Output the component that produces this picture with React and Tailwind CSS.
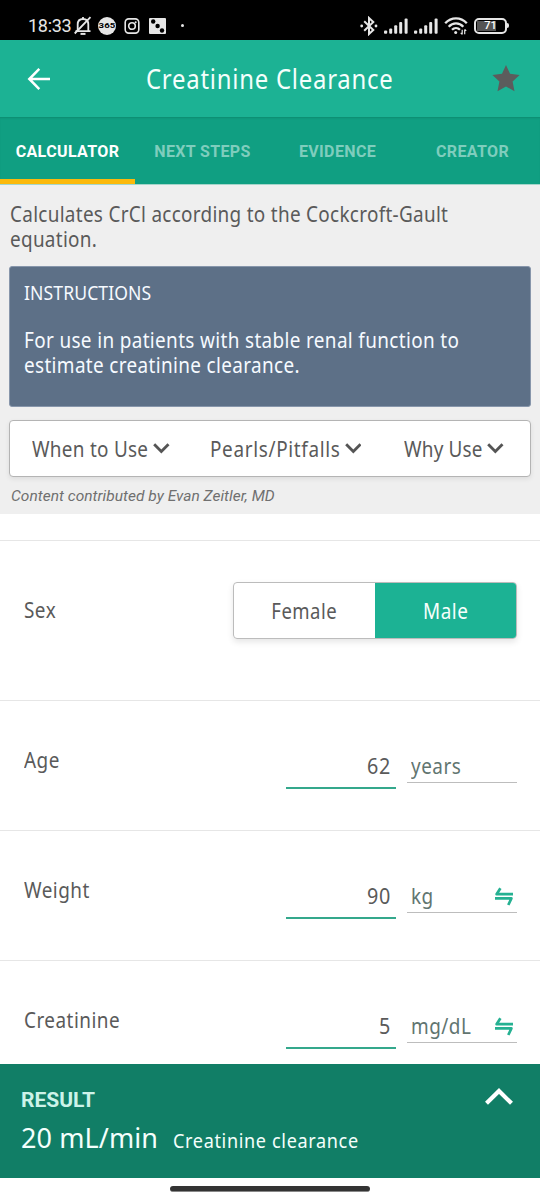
import React from "react";

const FONT = "font-['Noto_Sans',sans-serif]";
const NARROW = "inline-block origin-left scale-x-88 whitespace-nowrap";

function StatusBar() {
  return (
    <div className="flex h-10 items-end justify-between bg-black pr-[31px] pb-[3px] pl-[28px] text-[#e6e6e6]">
      <div className="flex h-[23px] items-center">
        <span className="w-[46px] text-[18px] leading-[23px] font-normal tracking-[-0.300px]">18:33</span>
        <svg className="h-5 w-[18px]" viewBox="0 0 18 20" fill="none" stroke="currentColor" strokeWidth="1.800">
          <path d="M1.500 15.200H16.500M3.700 15V8.500C3.700 5.200 5.800 3 9 3S14.300 5.200 14.300 8.500V15" />
          <path d="M9 1V3M0.700 17.500L16.500 1.200" />
          <path d="M6.500 17.900h5" strokeWidth="2" />
        </svg>
        <span className="ml-[6px] flex h-[18px] w-[18px] items-center justify-center rounded-full bg-[#e6e6e6] font-['Roboto',sans-serif] text-[8px] font-bold text-black">
          <span className="inline-block scale-x-120">365</span>
        </span>
        <svg className="ml-[8px] h-4 w-4" viewBox="0 0 16 16" fill="none" stroke="currentColor" strokeWidth="1.600">
          <rect x="1.200" y="0.900" width="13.600" height="14.200" rx="3.500" />
          <circle cx="8" cy="8" r="3.300" />
          <circle cx="11.700" cy="4.300" r="1" fill="currentColor" stroke="none" />
        </svg>
        <svg className="ml-[9px] h-4 w-[17px]" viewBox="0 0 17 16">
          <rect width="17" height="16" rx="1" fill="currentColor" />
          <circle cx="4.200" cy="3.500" r="2.200" fill="#000" />
          <circle cx="8.600" cy="8" r="2.200" fill="#000" />
          <circle cx="13" cy="12.500" r="2.200" fill="#000" />
        </svg>
        <span className="ml-[15px] h-[3px] w-[3px] rounded-full bg-[#e6e6e6]" />
      </div>
      <div className="flex h-[23px] items-center">
        <svg className="h-[20px] w-[18px]" viewBox="0 0 18 20" fill="none" stroke="currentColor" strokeWidth="2">
          <path d="M4.200 5.200L13.300 14L9 18V2L13.300 6L4.200 14.800" />
          <circle cx="1.700" cy="10" r="1.400" fill="currentColor" stroke="none" />
          <circle cx="16" cy="10" r="1.400" fill="currentColor" stroke="none" />
        </svg>
        <Signal className="ml-[6px]" />
        <Signal className="ml-[6px]" />
        <svg className="ml-[6px] h-[18px] w-[24px]" viewBox="0 0 24 18" fill="none" stroke="currentColor" strokeWidth="2.300">
          <path d="M1.200 6.300C7.200 -0.200 16.800 -0.200 22.800 6.300" />
          <path d="M4.700 9.700C8.800 5.300 15.200 5.300 19.300 9.700" />
          <path d="M8 12.800C10.300 10.500 13.700 10.500 16 12.800" />
          <circle cx="11.700" cy="15.600" r="1.500" fill="currentColor" stroke="none" />
          <path d="M18.200 17.500V12.800M20.700 12.500V17.200M16.700 15.900l1.500 1.500M22.200 13.900l-1.500-1.500" strokeWidth="1.200" />
        </svg>
        <div className="ml-[6px] flex h-4 w-[33px] items-center rounded-[5px] border-2 border-[#e6e6e6] p-px">
          <div className="flex h-full w-[19px] items-center justify-center bg-[#555] pl-[8px] font-['Roboto',sans-serif] text-[11px] leading-none font-medium text-white">
            71
          </div>
        </div>
        <span className="h-[5px] w-[2px] rounded-r bg-[#e6e6e6]" />
      </div>
    </div>
  );
}

function Signal({ className }) {
  return (
    <svg className={"h-4 w-6 " + className} viewBox="0 0 24 16" fill="currentColor">
      <rect x="0" y="12.500" width="3.200" height="3.200" rx="1" />
      <rect x="5.200" y="10.500" width="3" height="5.200" rx="1" />
      <rect x="10.200" y="7.300" width="3" height="8.400" rx="1" />
      <rect x="15.200" y="4" width="3" height="11.700" rx="1" />
      <rect x="20.600" y="0.500" width="3" height="15.200" rx="1" />
    </svg>
  );
}

function Header() {
  return (
    <header className="flex h-[77px] items-center bg-[#1cb294] pr-[20px] pl-[27px]">
      <svg className="h-6 w-6" viewBox="0 0 24 24" fill="none" stroke="#fff" strokeWidth="2.500">
        <path d="M23 12H2.500M12.300 1.900L2.300 12L12.300 22.100" />
      </svg>
      <h1 className={FONT + " ml-[95px] w-[346px] pt-[2px] text-[26.500px] text-[#f4fffc]"}>
        <span className="inline-block origin-left scale-x-90 tracking-[0.870px] whitespace-nowrap">
          Creatinine Clearance
        </span>
      </h1>
      <svg className="h-[27px] w-[28px]" viewBox="0 0 28 27" fill="#5c5c5c">
        <path d="M14 0L18 8.700L27.600 10L20.600 16.500L22.500 26.200L14 21.500L5.500 26.200L7.400 16.500L0.400 10L10 8.700Z" />
      </svg>
    </header>
  );
}

function Tabs() {
  const tabs = ["CALCULATOR", "NEXT STEPS", "EVIDENCE", "CREATOR"];
  return (
    <nav className="grid h-[68px] grid-cols-4 border-b border-b-[#a5d5ca] bg-[#109f82] shadow-[inset_0_2px_2px_-1px_rgba(0,60,40,0.200)]">
      {tabs.map((t, i) => (
        <div
          key={t}
          className={
            i === 0
              ? "border-b-[5px] border-[#fbb90b] pt-[23px] text-center text-[16px] leading-[23px] font-bold tracking-[0.370px] text-white"
              : "pt-[23px] text-center text-[16px] leading-[23px] font-bold tracking-[0.370px] text-[#7fcdbd]"
          }
        >
          {t}
        </div>
      ))}
    </nav>
  );
}

function Chevron() {
  return (
    <svg className="h-[11px] w-[17px]" viewBox="0 0 17 11" fill="none" stroke="#555" strokeWidth="2.900">
      <path d="M1.200 1.200L8.500 8.500L15.800 1.200" />
    </svg>
  );
}

function Intro() {
  return (
    <section className="h-[329px] bg-[#efefef] px-[9px] pt-[16px]">
      <p className={FONT + " flex h-[51px] flex-col pl-px text-[21.500px] leading-[25px] tracking-[0.330px] text-[#5a5a5a]"}>
        <span className={NARROW + " self-start"}>Calculates CrCl according to the Cockcroft-Gault </span>
        <span className={NARROW + " self-start"}>equation.</span>
      </p>
      <div className={FONT + " mt-[14px] h-[141px] rounded-[3px] border border-[#8796ab] bg-[#5d7087] px-[14px] pt-[13px] text-[#f6faff]"}>
        <h2 className="text-[20px] leading-[26px] tracking-[0.100px]">
          <span className={NARROW}>INSTRUCTIONS</span>
        </h2>
        <p className="mt-[21px] flex flex-col text-[21.500px] leading-[25px] tracking-[0.400px]">
          <span className={NARROW + " self-start"}>For use in patients with stable renal function to </span>
          <span className={NARROW + " self-start"}>estimate creatinine clearance.</span>
        </p>
      </div>
      <div
        className={
          FONT +
          " mt-[13px] flex h-[57px] items-center rounded-[4px] border border-[#b4b4b4] bg-white pr-[26px] pl-[22px] text-[21.500px] text-[#5a5a5a] shadow-[0_2px_5px_rgba(0,0,0,0.080)]"
        }
      >
        <span className="w-[121px] pt-px tracking-[0.300px]">
          <span className={NARROW}>When to Use</span>
        </span>
        <Chevron />
        <span className="ml-[40px] w-[135px] pt-px tracking-[0.750px]">
          <span className={NARROW}>Pearls/Pitfalls</span>
        </span>
        <Chevron />
        <span className="ml-[43px] w-[83px] pt-px tracking-[0.200px]">
          <span className={NARROW}>Why Use</span>
        </span>
        <Chevron />
      </div>
      <p className="mt-[8px] pl-[2px] text-[15.500px] leading-[22px] tracking-[0.020px] text-[#707070] italic">
        Content contributed by Evan Zeitler, MD
      </p>
    </section>
  );
}

function SexRow() {
  return (
    <div className="flex h-[160px] justify-between border-t border-[#e6e6e6] pt-[41px] pr-[23px] pl-[24px]">
      <span className="pt-[12px] leading-[32px]">
        <span className={NARROW}>Sex</span>
      </span>
      <div className="flex h-[57px] w-[284px] rounded-[4px] border border-[#bcbcbc] text-center leading-[55px] shadow-[0_3px_6px_rgba(0,0,0,0.100)]">
        <span className="w-[141px]">
          <span className="inline-block scale-x-86">Female</span>
        </span>
        <span className="grow rounded-r-[3px] bg-[#1cb294] text-[#f6fffc]">
          <span className="inline-block scale-x-88">Male</span>
        </span>
      </div>
    </div>
  );
}

function InputRow({ label, value, unit, swap }) {
  return (
    <div className="flex h-[130px] border-t border-[#e6e6e6] pl-[24px]">
      <span className="w-[262px] pt-[43px] leading-[32px]">
        <span className={NARROW}>{label}</span>
      </span>
      <div className="mt-[49px] h-[39px] w-[110px] border-b-2 border-[#34a88c] pr-[5px] text-right leading-[32px]">
        <span className="inline-block origin-right scale-x-92">{value}</span>
      </div>
      <div className="mt-[49px] ml-[11px] flex h-[33px] w-[110px] justify-between border-b border-[#bdbdbd] pr-[3px] pl-[4px] leading-[32px] text-[#617570]">
        <span className={NARROW}>{unit}</span>
        {swap && (
          <svg className="mt-[7px] h-5 w-[20px]" viewBox="0 0 20 20" fill="none" stroke="#25b192" strokeWidth="2.700">
            <path d="M19 7.200H2.600L6.400 1.200" strokeLinejoin="round" />
            <path d="M1 11.400H17.400L14.300 18" strokeLinejoin="round" />
          </svg>
        )}
      </div>
    </div>
  );
}

function ResultBar() {
  return (
    <footer className="flex h-[114px] justify-between bg-[#117e66] pr-[26px] pl-[21px]">
      <div className="pt-[22px]">
        <h2 className="text-[21px] leading-[28px] font-bold text-[#cdf3e9]">RESULT</h2>
        <p className={FONT + " flex items-baseline text-[#f4fffc]"}>
          <span className="w-[152px] text-[27px] leading-[48px] tracking-[0.100px] whitespace-nowrap">20 mL/min</span>
          <span className={NARROW + " text-[20.500px] tracking-[0.750px]"}>Creatinine clearance</span>
        </p>
      </div>
      <svg className="mt-[23px] h-[20px] w-[30px]" viewBox="0 0 30 20" fill="none" stroke="#fff" strokeWidth="4.200">
        <path d="M2.500 16.300L15 4L27.500 16.300" />
      </svg>
    </footer>
  );
}

export default function App() {
  return (
    <div className="flex h-[1200px] w-[540px] flex-col overflow-hidden bg-white font-['Roboto',sans-serif]">
      <StatusBar />
      <Header />
      <Tabs />
      <main className="h-[879px] overflow-hidden">
        <Intro />
        <div className={FONT + " mt-[26px] text-[21.500px] tracking-[0.550px] text-[#5a5a5a]"}>
          <SexRow />
          <InputRow label="Age" value="62" unit="years" />
          <InputRow label="Weight" value="90" unit="kg" swap />
          <InputRow label="Creatinine" value="5" unit="mg/dL" swap />
        </div>
      </main>
      <ResultBar />
      <div className="flex h-[22px] justify-center pt-[8px]">
        <span className="h-[6px] w-[200px] rounded-full border-b border-[#888] bg-[#333]" />
      </div>
    </div>
  );
}
